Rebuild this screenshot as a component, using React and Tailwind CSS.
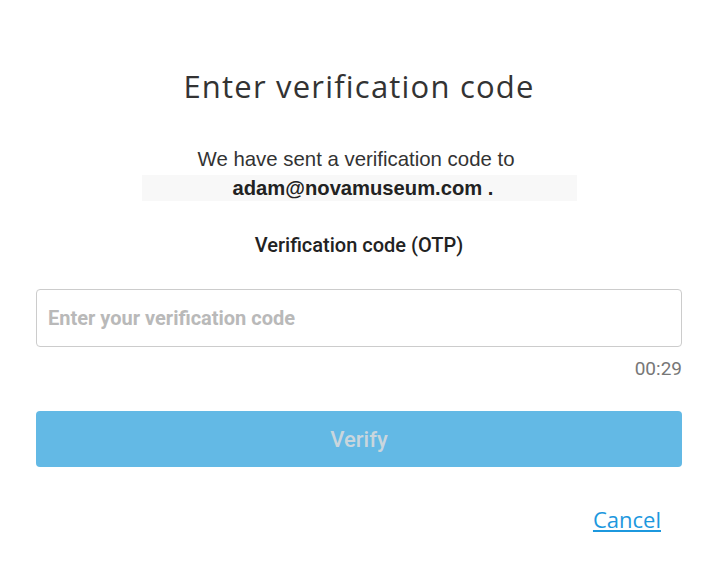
export default function App() {
  return (
    <div className="w-[718px] h-[561px] bg-white overflow-hidden">
      <div className="px-[36px] pt-[66px]">
        <h1 className="text-center text-[31px] leading-[40px] text-[#333] font-['Open_Sans',sans-serif] tracking-[1.2px]">
          Enter verification code
        </h1>

        <div className="mt-[42px] flex flex-col items-center font-['Liberation_Sans',Arial,sans-serif]">
          <p className="text-[20.4px] leading-[23px] text-[#333] pr-[6px]">We have sent a verification code to</p>
          <div className="mt-[4px] w-[435px] h-[26px] bg-[#f8f8f8] flex items-center justify-center">
            <span className="text-[20.2px] font-bold text-[#222] pl-[8px]">adam@novamuseum.com .</span>
          </div>
        </div>

        <div className="mt-[32px] text-center text-[20px] leading-[24px] font-medium text-[#222] font-['Roboto',sans-serif]">
          Verification code (OTP)
        </div>

        <input
          type="text"
          placeholder="Enter your verification code"
          className="mt-[32px] block w-full h-[58px] rounded-[4px] border border-[#cccccc] px-[11px] text-[20px] font-bold font-['Roboto',sans-serif] placeholder:text-[#b9b9b9] outline-none"
        />

        <div className="mt-[11px] text-right text-[19px] leading-[22px] text-[#777] font-['Roboto',sans-serif]">00:29</div>

        <button
          type="button"
          className="mt-[31px] w-full h-[56px] rounded-[4px] bg-[#63b9e5] text-[22px] font-medium text-[#c9d6dd] font-['Roboto',sans-serif]"
        >
          Verify
        </button>

        <div className="mt-[39px] flex justify-end pr-[21px]">
          <a href="#" className="text-[22px] leading-[26px] text-[#1c98de] underline font-['Open_Sans',sans-serif]">
            Cancel
          </a>
        </div>
      </div>
    </div>
  );
}
